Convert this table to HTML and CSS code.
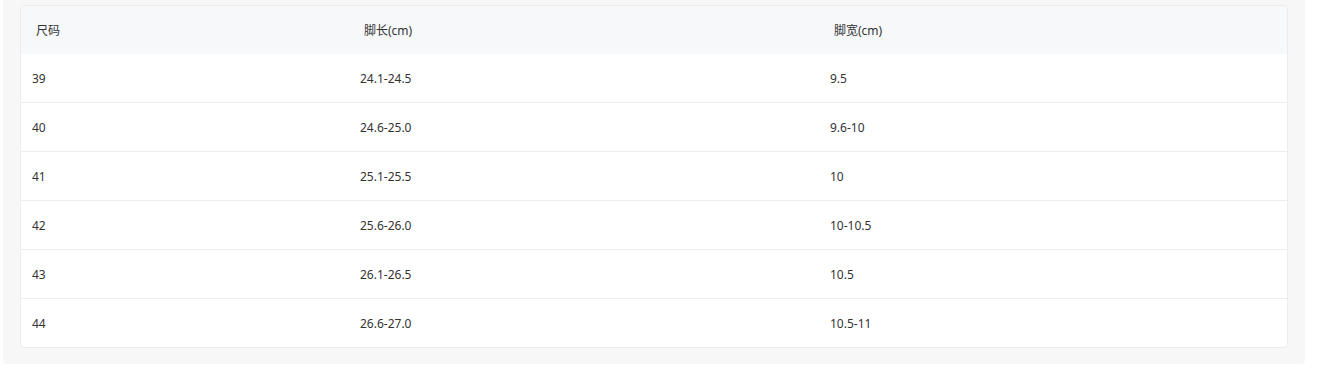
FILE: index.html
```html
<!DOCTYPE html>
<html lang="zh">
<head>
<meta charset="utf-8">
<link rel="stylesheet" href="styles.css">
</head>
<body>
<div class="panel">
  <div class="table-wrap">
    <table class="size-table">
      <colgroup>
        <col class="c1"><col class="c2"><col class="c3">
      </colgroup>
      <thead>
        <tr><th>尺码</th><th>脚长(cm)</th><th>脚宽(cm)</th></tr>
      </thead>
      <tbody>
        <tr><td>39</td><td>24.1-24.5</td><td>9.5</td></tr>
        <tr><td>40</td><td>24.6-25.0</td><td>9.6-10</td></tr>
        <tr><td>41</td><td>25.1-25.5</td><td>10</td></tr>
        <tr><td>42</td><td>25.6-26.0</td><td>10-10.5</td></tr>
        <tr><td>43</td><td>26.1-26.5</td><td>10.5</td></tr>
        <tr><td>44</td><td>26.6-27.0</td><td>10.5-11</td></tr>
      </tbody>
    </table>
  </div>
</div>
</body>
</html>
```
FILE: styles.css
```css
html, body {
  margin: 0;
  padding: 0;
  background: #ffffff;
}
body {
  font-family: "Noto Sans", "Noto Sans CJK SC", sans-serif;
  font-size: 12px;
  color: #333333;
}
.panel {
  margin-left: 3px;
  width: 1302px;
  box-sizing: border-box;
  padding: 5px 17px 16px 17px;
  background: #f7f7f7;
  border-radius: 0 0 4px 4px;
}
.table-wrap {
  background: #ffffff;
  border: 1px solid #ececec;
  border-radius: 4px;
  overflow: hidden;
}
.size-table {
  width: 100%;
  border-collapse: collapse;
  table-layout: fixed;
}
.c1 { width: 328px; }
.c2 { width: 470px; }
.c3 { width: auto; }
.size-table th {
  height: 48px;
  padding: 0 0 0 15px;
  text-align: left;
  font-weight: normal;
  background: #f7f8fa;
  color: #333333;
}
.size-table td {
  height: 48px;
  padding: 0 0 0 11px;
  border-top: 1px solid #ededed;
}
.size-table tbody tr:first-child td {
  border-top: none;
}
```
